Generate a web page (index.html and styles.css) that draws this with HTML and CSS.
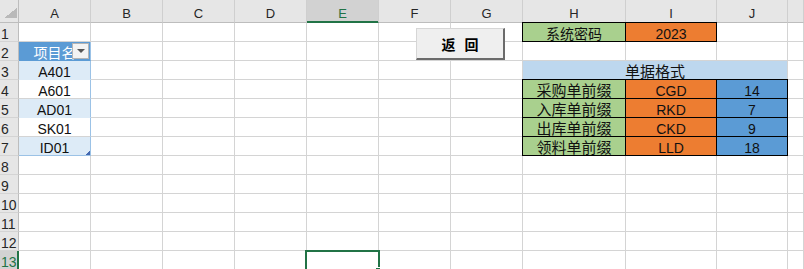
FILE: index.html
```html
<!DOCTYPE html>
<html lang="zh-CN">
<head>
  <meta charset="UTF-8" />
  <title>系统设置</title>
  <link rel="stylesheet" href="styles.css">
</head>
<body>
  <div class="sheet">
    <div class="grid">
      <!-- column headers -->
      <div class="corner"><span></span></div>
      <div class="hd">A</div>
      <div class="hd">B</div>
      <div class="hd">C</div>
      <div class="hd">D</div>
      <div class="hd on">E</div>
      <div class="hd">F</div>
      <div class="hd">G</div>
      <div class="hd">H</div>
      <div class="hd">I</div>
      <div class="hd">J</div>
      <div class="hd"></div>

      <!-- row 1 -->
      <div class="rh">1</div>
      <div class="c"></div><div class="c"></div><div class="c"></div><div class="c"></div>
      <div class="c"></div><div class="c"></div><div class="c"></div>
      <div class="c bx green small">系统密码</div>
      <div class="c bx orange">2023</div>
      <div class="c"></div><div class="c"></div>

      <!-- row 2 -->
      <div class="rh">2</div>
      <div class="c tb tb-head">项目名<span class="drop"><i></i></span></div>
      <div class="c"></div><div class="c"></div><div class="c"></div>
      <div class="c"></div><div class="c"></div><div class="c"></div>
      <div class="c"></div><div class="c"></div><div class="c"></div><div class="c"></div>

      <!-- row 3 -->
      <div class="rh">3</div>
      <div class="c tb band">A401</div>
      <div class="c"></div><div class="c"></div><div class="c"></div>
      <div class="c"></div><div class="c"></div><div class="c"></div>
      <div class="c merged cn">单据格式</div>
      <div class="c"></div>

      <!-- row 4 -->
      <div class="rh">4</div>
      <div class="c tb">A601</div>
      <div class="c"></div><div class="c"></div><div class="c"></div>
      <div class="c"></div><div class="c"></div><div class="c"></div>
      <div class="c bx green cn">采购单前缀</div>
      <div class="c bx orange">CGD</div>
      <div class="c bx blue">14</div>
      <div class="c"></div>

      <!-- row 5 -->
      <div class="rh">5</div>
      <div class="c tb band">AD01</div>
      <div class="c"></div><div class="c"></div><div class="c"></div>
      <div class="c"></div><div class="c"></div><div class="c"></div>
      <div class="c bx green cn">入库单前缀</div>
      <div class="c bx orange">RKD</div>
      <div class="c bx blue">7</div>
      <div class="c"></div>

      <!-- row 6 -->
      <div class="rh">6</div>
      <div class="c tb">SK01</div>
      <div class="c"></div><div class="c"></div><div class="c"></div>
      <div class="c"></div><div class="c"></div><div class="c"></div>
      <div class="c bx green cn">出库单前缀</div>
      <div class="c bx orange">CKD</div>
      <div class="c bx blue">9</div>
      <div class="c"></div>

      <!-- row 7 -->
      <div class="rh">7</div>
      <div class="c tb band tb-end">ID01<span class="resize"></span></div>
      <div class="c"></div><div class="c"></div><div class="c"></div>
      <div class="c"></div><div class="c"></div><div class="c"></div>
      <div class="c bx green cn">领料单前缀</div>
      <div class="c bx orange">LLD</div>
      <div class="c bx blue">18</div>
      <div class="c"></div>

      <!-- rows 8-12 -->
      <div class="rh">8</div>
      <div class="c"></div><div class="c"></div><div class="c"></div><div class="c"></div>
      <div class="c"></div><div class="c"></div><div class="c"></div><div class="c"></div>
      <div class="c"></div><div class="c"></div><div class="c"></div>

      <div class="rh">9</div>
      <div class="c"></div><div class="c"></div><div class="c"></div><div class="c"></div>
      <div class="c"></div><div class="c"></div><div class="c"></div><div class="c"></div>
      <div class="c"></div><div class="c"></div><div class="c"></div>

      <div class="rh">10</div>
      <div class="c"></div><div class="c"></div><div class="c"></div><div class="c"></div>
      <div class="c"></div><div class="c"></div><div class="c"></div><div class="c"></div>
      <div class="c"></div><div class="c"></div><div class="c"></div>

      <div class="rh">11</div>
      <div class="c"></div><div class="c"></div><div class="c"></div><div class="c"></div>
      <div class="c"></div><div class="c"></div><div class="c"></div><div class="c"></div>
      <div class="c"></div><div class="c"></div><div class="c"></div>

      <div class="rh">12</div>
      <div class="c"></div><div class="c"></div><div class="c"></div><div class="c"></div>
      <div class="c"></div><div class="c"></div><div class="c"></div><div class="c"></div>
      <div class="c"></div><div class="c"></div><div class="c"></div>

      <!-- row 13, active cell E13 -->
      <div class="rh on">13</div>
      <div class="c"></div><div class="c"></div><div class="c"></div><div class="c"></div>
      <div class="c active"><span class="sel"></span><span class="fill"></span></div>
      <div class="c"></div><div class="c"></div><div class="c"></div>
      <div class="c"></div><div class="c"></div><div class="c"></div>
    </div>

    <button class="btn" type="button">返 回</button>
  </div>
</body>
</html>
```

FILE: styles.css
```css
* {
  box-sizing: border-box;
}
body {
  margin: 0;
  background: #fff;
  font-family: "Liberation Sans", "Noto Sans CJK SC", sans-serif;
  overflow: hidden;
}
.sheet {
  position: relative;
  width: 804px;
  height: 269px;
  overflow: hidden;
}
.grid {
  display: grid;
  grid-template-columns: 19px repeat(7, 72px) 103px 91px 71px 1fr;
  grid-template-rows: 23px repeat(13, 19px);
}

/* headers */
.corner {
  background: #e6e6e6;
  border-right: 1px solid #bdbdbd;
  border-bottom: 1px solid #bdbdbd;
  display: flex;
  justify-content: flex-end;
  align-items: flex-end;
  padding: 0 1px 4px 0;
}
.corner span {
  width: 13px;
  height: 10px;
  background: linear-gradient(to top left, #b9b9b9 50%, transparent 50%);
}
.hd {
  background: #e6e6e6;
  border-right: 1px solid #cfcfcf;
  border-bottom: 1px solid #bdbdbd;
  font-size: 13px;
  line-height: 14px;
  padding-top: 7px;
  text-align: center;
  color: #262626;
}
.hd.on {
  background: #d2d2d2;
  color: #217346;
  border-bottom-color: #217346;
  box-shadow: inset 0 -1px 0 #217346;
}
.rh {
  background: #e6e6e6;
  border-right: 1px solid #bdbdbd;
  border-bottom: 1px solid #d4d4d4;
  font-size: 14px;
  line-height: 16px;
  padding: 3px 0 0 1px;
  color: #262626;
  overflow: hidden;
  white-space: nowrap;
}
.rh.on {
  background: #d2d2d2;
  color: #217346;
  border-right-color: #217346;
  box-shadow: inset -1px 0 0 #217346;
}

/* cells */
.c {
  border-right: 1px solid #d4d4d4;
  border-bottom: 1px solid #d4d4d4;
  font-size: 14px;
  line-height: 16px;
  padding-top: 3px;
  text-align: center;
  white-space: nowrap;
  overflow: hidden;
  color: #111;
}
.cn {
  font-size: 15px;
}
.small {
  font-size: 14px;
}
.bx {
  border: 1px solid #000;
  margin: -1px 0 0 -1px;
}
.green {
  background: #a9d08e;
}
.orange {
  background: #ed7d31;
}
.blue {
  background: #5b9bd5;
}
.merged {
  grid-column: span 3;
  background: #bdd7ee;
}

/* table in column A */
.tb {
  position: relative;
  border-right-color: #9bc2e6;
}
.tb-head {
  background: #5b9bd5;
  color: #fff;
  border-bottom-color: #5b9bd5;
}
.band {
  background: #ddebf7;
  border-bottom-color: #ddebf7;
}
.tb-end {
  border-bottom-color: #9bc2e6;
}
.drop {
  position: absolute;
  right: 1px;
  top: 1px;
  width: 17px;
  height: 16px;
  background: #f3f3f3;
  border: 1px solid #b4b4b4;
  display: flex;
  justify-content: center;
  align-items: center;
}
.drop i {
  width: 0;
  height: 0;
  border-left: 4px solid transparent;
  border-right: 4px solid transparent;
  border-top: 4px solid #555;
}
.resize {
  position: absolute;
  right: 0;
  bottom: 0;
  width: 4px;
  height: 4px;
  background: linear-gradient(to top left, #4468b0 60%, transparent 60%);
}

/* selected cell */
.active {
  position: relative;
  overflow: visible;
}
.sel {
  position: absolute;
  left: -2px;
  top: -1px;
  width: 75px;
  height: 40px;
  border: 2px solid #217346;
}
.fill {
  position: absolute;
  left: 68px;
  top: 16px;
  width: 6px;
  height: 6px;
  background: #217346;
  border: 1px solid #fff;
}

/* button */
.btn {
  position: absolute;
  left: 416px;
  top: 28px;
  width: 89px;
  height: 32px;
  background: #efefef;
  border-top: 1px solid #d6d6d6;
  border-left: 1px solid #d6d6d6;
  border-right: 2px solid #6b6b6b;
  border-bottom: 2px solid #6b6b6b;
  font-family: "Liberation Sans", "Noto Sans CJK SC", sans-serif;
  font-size: 14px;
  font-weight: 700;
  word-spacing: 5px;
  color: #000;
  padding: 0;
}
```
